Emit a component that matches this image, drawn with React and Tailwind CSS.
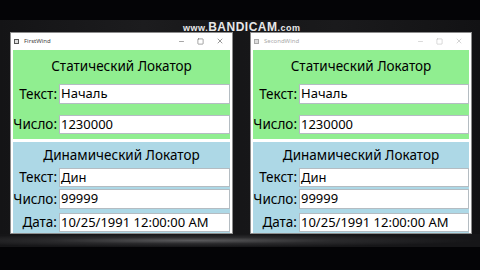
import { Minus, Square, X } from "lucide-react";

const Row = ({ label, value, h, mt, mb }) => (
  <div className={`flex items-stretch ${h} ${mt} ${mb}`}>
    <div className="w-[46px] flex items-center justify-end pr-[2px] text-[13.5px] text-black">{label}</div>
    <div className="flex-1 bg-white border border-[#b4bcc2] flex items-center pl-[1px] text-[13px] text-black">
      {value}
    </div>
  </div>
);

const Window = ({ title, active, width }) => (
  <div className={`${width} h-[202px] bg-white border border-[#8c8c8c] flex flex-col`}>
    <div className="h-[16px] flex items-center pl-[3px]">
      <div className={`w-[5px] h-[5px] border ${active ? "border-[#555]" : "border-[#aaa]"} bg-[#ddd]`} />
      <span className={`ml-[5px] text-[6px] ${active ? "text-[#444]" : "text-[#aaa]"}`}>{title}</span>
      <div className={`ml-auto flex items-center gap-[12px] pr-[8px] ${active ? "text-[#333]" : "text-[#aaa]"}`}>
        <Minus size={7} strokeWidth={1.5} />
        <Square size={7} strokeWidth={1.5} />
        <X size={8} strokeWidth={1.5} />
      </div>
    </div>
    <div className="flex-1 flex flex-col px-[2px] pt-[1px]">
      <div className="h-[89px] bg-[#90ee90] flex flex-col">
        <div className="h-[32px] flex items-center justify-center text-[13.5px] text-black">Статический Локатор</div>
        <Row label="Текст:" value="Началь" h="h-[20px]" mt="mt-[2px]" mb="mb-[11px]" />
        <Row label="Число:" value="1230000" h="h-[19px]" mt="" mb="" />
      </div>
      <div className="h-[91px] mt-[3px] bg-[#add8e6] flex flex-col">
        <div className="h-[26px] flex items-center justify-center text-[13.5px] text-black">Динамический Локатор</div>
        <Row label="Текст:" value="Дин" h="h-[19px]" mt="" mb="mb-[2px]" />
        <Row label="Число:" value="99999" h="h-[20px]" mt="" mb="mb-[4px]" />
        <Row label="Дата:" value="10/25/1991 12:00:00 AM" h="h-[19px]" mt="" mb="" />
      </div>
    </div>
  </div>
);

export default function App() {
  return (
    <div className="w-[480px] h-[270px] bg-[#040406] relative overflow-hidden font-['Noto_Sans',sans-serif]">
      <div className="h-[20px]" />
      <div className="h-[227px] bg-[linear-gradient(90deg,#141416_0%,#1c1c1e_30%,#161618_50%,#1a1a1c_70%,#121214_100%)] flex flex-col">
        <div className="h-[12px]" />
        <div className="flex pl-[10px] gap-[17px]">
          <Window title="FirstWind" active width="w-[223px]" />
          <Window title="SecondWind" width="w-[222px]" />
        </div>
        <div className="flex-1 bg-[radial-gradient(ellipse_at_40%_50%,#5a5a5c_0%,#2a2a2c_35%,#161618_70%)]" />
      </div>
      <div className="absolute left-[183px] top-[21px] text-[#e8e8e8] font-['Liberation_Sans',sans-serif] font-bold leading-none flex items-baseline tracking-[0.5px]">
        <span className="text-[9px]">www.</span>
        <span className="text-[12px]">BANDICAM</span>
        <span className="text-[9px]">.com</span>
      </div>
    </div>
  );
}
